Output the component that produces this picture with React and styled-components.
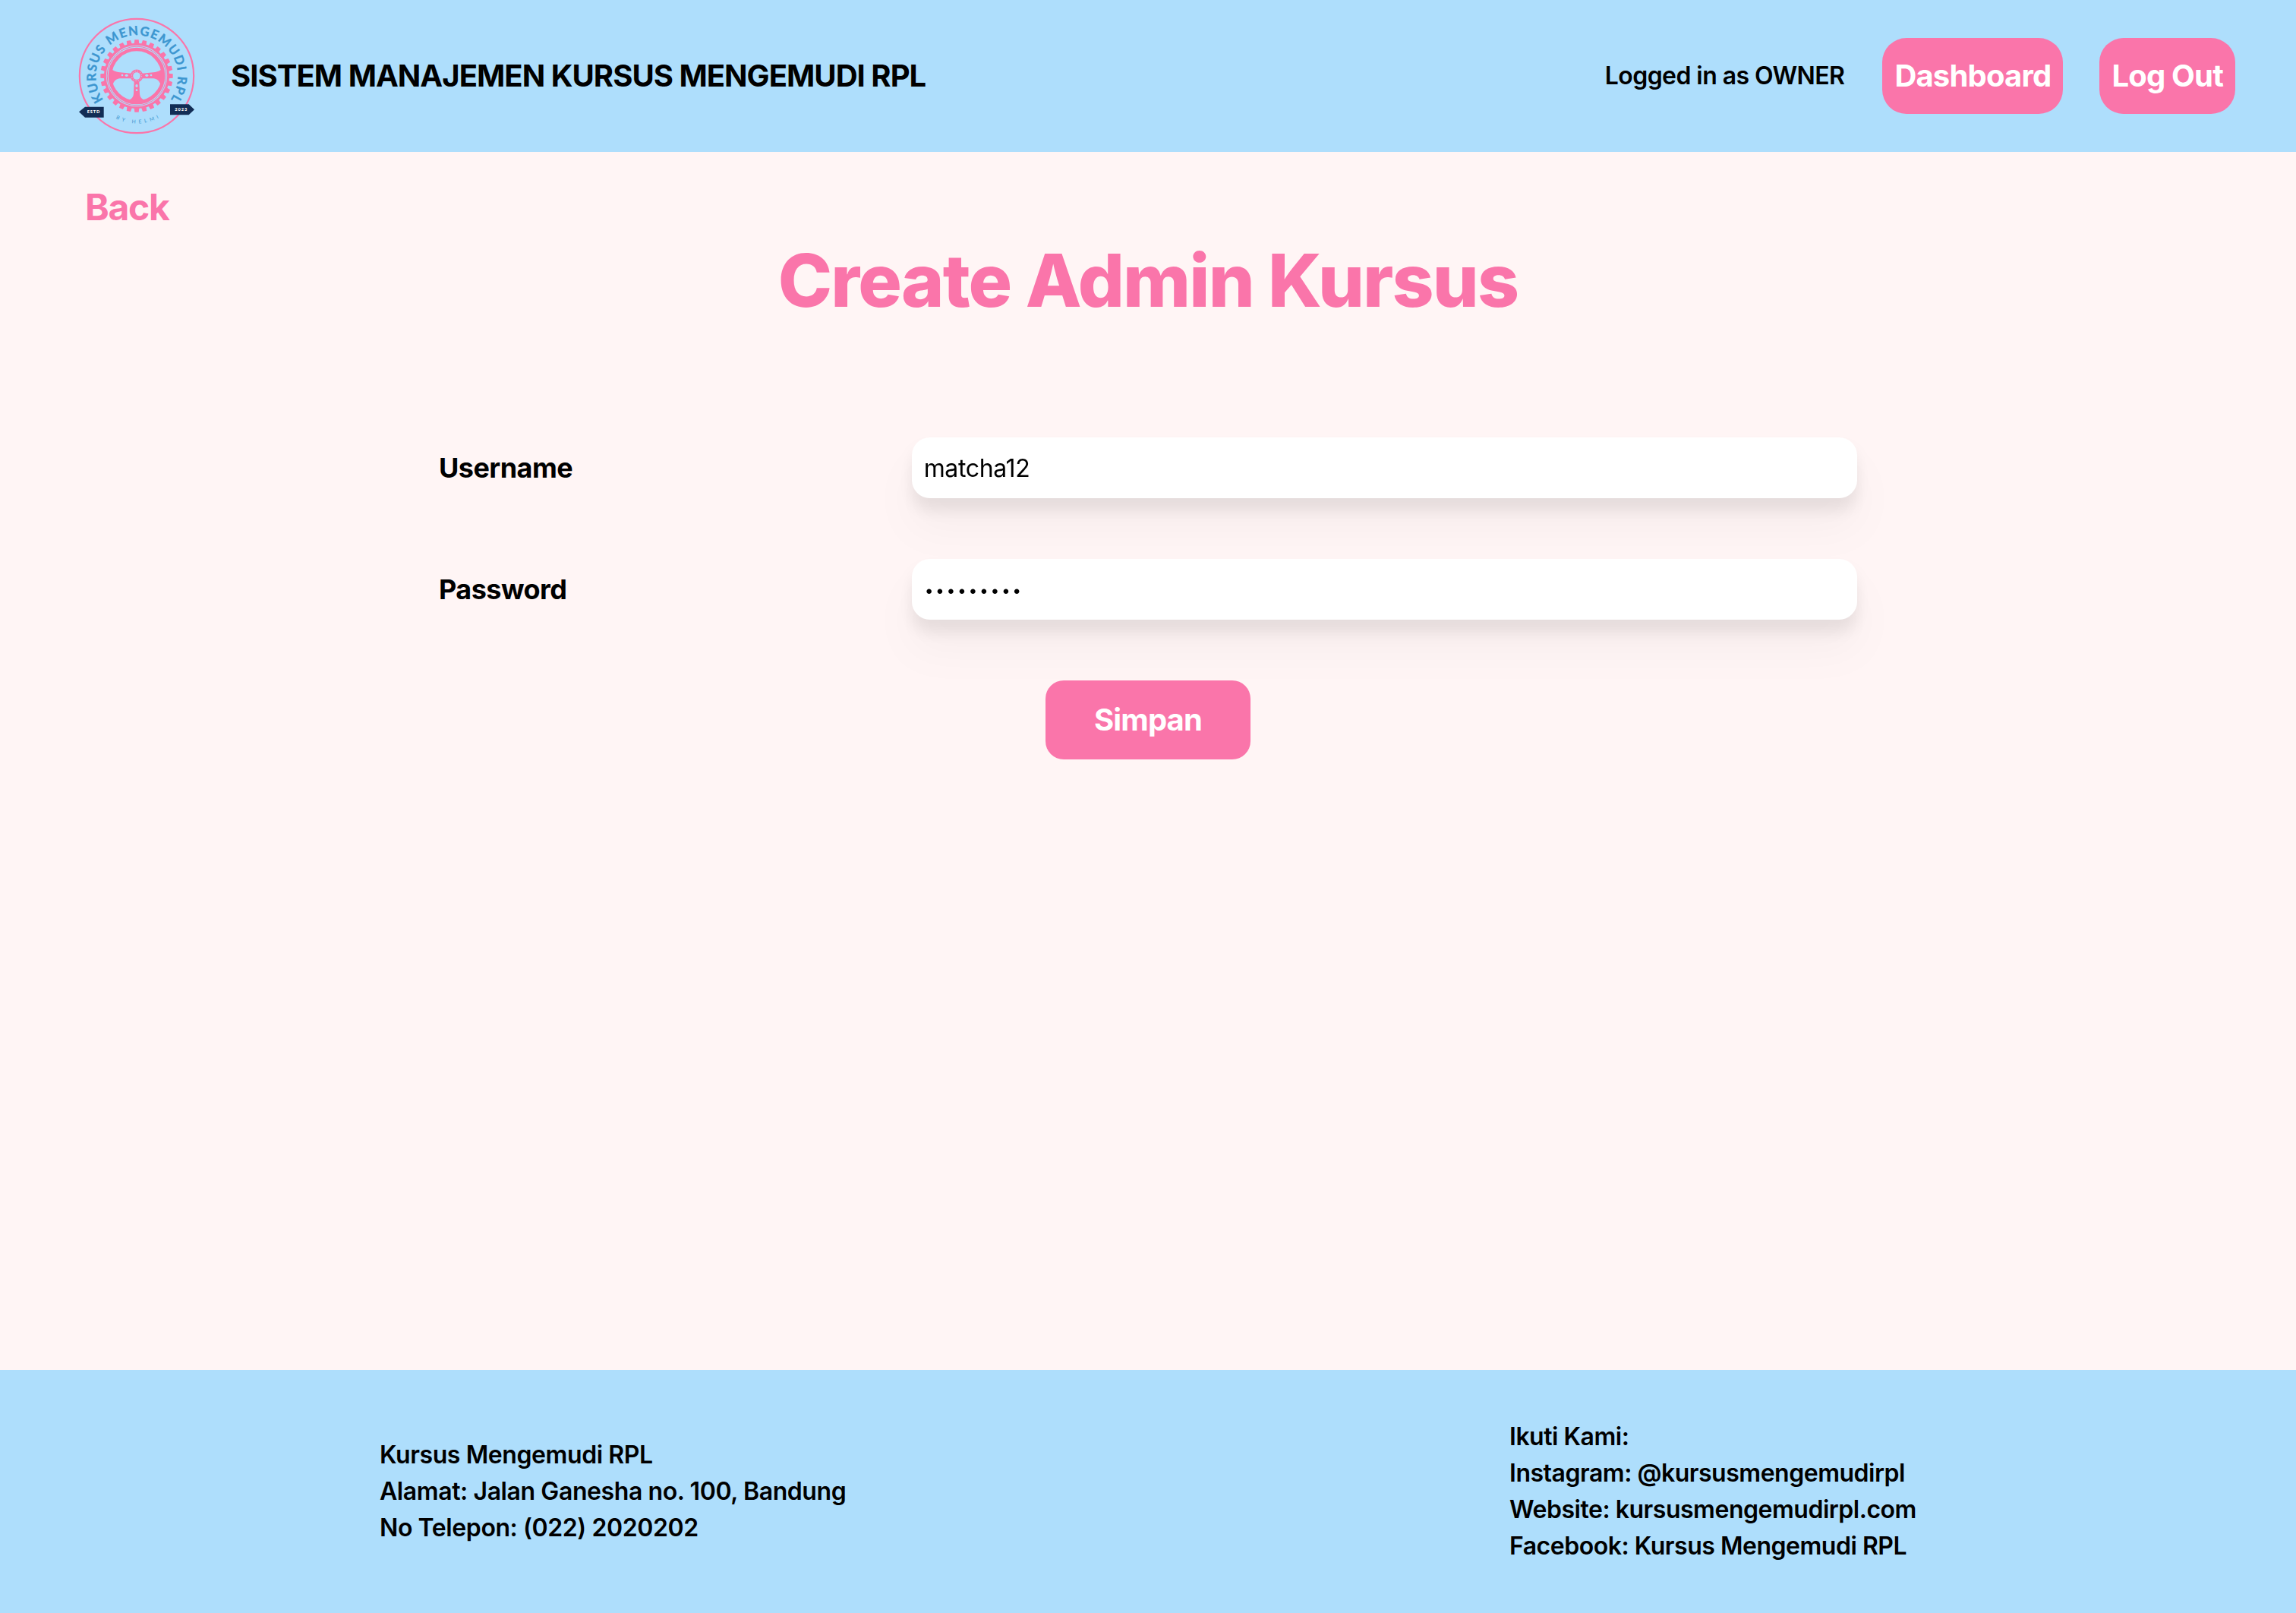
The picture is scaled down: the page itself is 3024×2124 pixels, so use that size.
import React from "react";
import styled, { createGlobalStyle } from "styled-components";

const colors = {
  sky: "#AEDEFC",
  pink: "#FA75AA",
  blush: "#FFF5F5",
  ink: "#000000",
  logoBlue: "#3C96D0",
  navy: "#122D55",
};

const GlobalStyle = createGlobalStyle`
  *, *::before, *::after { box-sizing: border-box; }
  body {
    margin: 0;
    background: ${colors.blush};
    color: ${colors.ink};
    font-family: Inter, "Liberation Sans", sans-serif;
    -webkit-font-smoothing: antialiased;
  }
  h1, p { margin: 0; }
`;

const Page = styled.div`
  display: flex;
  flex-direction: column;
  min-height: 100vh;
`;

const Navbar = styled.header`
  display: flex;
  align-items: center;
  justify-content: space-between;
  height: 200px;
  padding: 0 80px;
  background: ${colors.sky};
`;

const Brand = styled.div`
  display: flex;
  align-items: center;
  gap: 24px;
`;

const BrandName = styled.p`
  font-size: 40px;
  line-height: 56px;
  font-weight: 700;
  letter-spacing: -0.96px;
  white-space: nowrap;
`;

const LogoSvg = styled.svg`
  display: block;
  width: 200px;
  height: 200px;
`;

const NavActions = styled.nav`
  display: flex;
  align-items: center;
  gap: 48px;
`;

const Session = styled.p`
  padding-right: 2px;
  font-size: 32px;
  line-height: 48px;
  font-weight: 600;
  letter-spacing: -0.57px;
`;

const NavButton = styled.button`
  height: 100px;
  padding: 0 16px;
  border: 0;
  border-radius: 32px;
  background: ${colors.pink};
  color: #fff;
  font: 700 40px/56px Inter, "Liberation Sans", sans-serif;
  letter-spacing: -0.81px;
  white-space: nowrap;
`;

const Main = styled.main`
  flex: 1;
  display: flex;
  flex-direction: column;
  padding-top: 40px;
`;

const BackLink = styled.a`
  align-self: flex-start;
  margin-left: 112px;
  color: ${colors.pink};
  font-size: 48px;
  line-height: 65px;
  font-weight: 700;
  letter-spacing: -1.3px;
`;

const Title = styled.h1`
  margin: 15px 0 158px;
  color: ${colors.pink};
  font-size: 96px;
  line-height: 98px;
  font-weight: 800;
  letter-spacing: -1.8px;
  text-align: center;
`;

const Form = styled.form`
  display: flex;
  flex-direction: column;
  align-items: center;
  gap: 80px;
`;

const Field = styled.div`
  display: grid;
  grid-template-columns: 1fr 2fr;
  align-items: center;
  width: 1868px;
`;

const Label = styled.label`
  font-size: 36px;
  line-height: 56px;
  font-weight: 700;
  letter-spacing: -0.54px;
`;

const Input = styled.input`
  width: 100%;
  height: 80px;
  padding: 0 16px;
  border: 0;
  border-radius: 24px;
  outline: 0;
  background: #fff;
  filter: drop-shadow(0 40px 26px rgba(0, 0, 0, 0.03))
    drop-shadow(0 16px 10px rgba(0, 0, 0, 0.08));
  color: ${colors.ink};
  font: 400 32px/48px Inter, "Liberation Sans", sans-serif;
  letter-spacing: -0.36px;

  &[type="password"] {
    padding-left: 17px;
    padding-top: 2px;
    font-size: 21px;
    letter-spacing: 2.65px;
  }
`;

const SubmitButton = styled.button`
  padding: 24px 64px;
  border: 0;
  border-radius: 24px;
  background: ${colors.pink};
  color: #fff;
  font: 700 40px/56px Inter, "Liberation Sans", sans-serif;
  letter-spacing: -0.88px;
`;

const Footer = styled.footer`
  display: flex;
  align-items: center;
  justify-content: space-between;
  height: 320px;
  padding: 0 499px 0 500px;
  background: ${colors.sky};
`;

const FooterColumn = styled.div`
  width: ${(p) => p.$width}px;
  font-size: 32px;
  line-height: 48px;
  font-weight: 600;
  letter-spacing: ${(p) => p.$tracking}px;
  white-space: nowrap;
`;

const TEETH = Array.from({ length: 28 }, (_, i) => (i * 360) / 28);

function Logo() {
  return (
    <LogoSvg viewBox="-30 -30 600 600" role="img" aria-label="Kursus Mengemudi RPL">
      <defs>
        <path id="arc-top" d="M 138.5 364.5 A 162 162 0 1 1 405.5 361.5" />
        <path id="arc-bottom" d="M 187.6 438.3 A 187.5 187.5 0 0 0 360 434.5" />
      </defs>

      <circle cx="270" cy="270" r="225.5" fill="none" stroke={colors.pink} strokeWidth="6.5" />

      {/* gear */}
      <g fill={colors.pink}>
        {TEETH.map((a) => (
          <path key={a} d="M260 144 L262 127 H278 L280 144 Z" transform={`rotate(${a} 270 270)`} />
        ))}
      </g>
      <circle cx="270" cy="270" r="125" fill="none" stroke={colors.pink} strokeWidth="9" />
      <circle cx="270" cy="270" r="116.5" fill="none" stroke={colors.pink} strokeWidth="3" />

      {/* steering wheel */}
      <circle cx="270" cy="270" r="105" fill="none" stroke={colors.pink} strokeWidth="14" />
      <g fill={colors.pink}>
        <path d="M168 243 C178 247 184 254 204 256 L248 260 V280 L204 280 C190 282 184 286 176 302 L168 300 Z" />
        <path d="M372 243 C362 247 356 254 336 256 L292 260 V280 L336 280 C350 282 356 286 364 302 L372 300 Z" />
        <path d="M260 292 H280 L282 340 C283 354 290 362 306 368 L270 378 L234 368 C250 362 257 354 258 340 Z" />
      </g>
      <circle cx="270" cy="270" r="25.5" fill={colors.pink} />
      <circle cx="270" cy="270" r="19.5" fill="none" stroke={colors.sky} strokeWidth="3" strokeDasharray="4 6.21" />
      <circle cx="270" cy="270" r="14.5" fill={colors.sky} />
      <g fill={colors.sky}>
        <circle cx="213" cy="267" r="4" />
        <ellipse cx="230" cy="268" rx="6" ry="5" />
        <circle cx="327" cy="267" r="4" />
        <ellipse cx="310" cy="268" rx="6" ry="5" />
        <ellipse cx="270" cy="309" rx="5" ry="6" />
        <circle cx="270" cy="326" r="4" />
      </g>

      <text
        fill={colors.logoBlue}
        stroke={colors.logoBlue}
        strokeWidth="1"
        fontFamily="Lato, sans-serif"
        fontSize="50"
        fontWeight="700"
        textLength="705"
      >
        <textPath href="#arc-top" textLength="705">KURSUS MENGEMUDI RPL</textPath>
      </text>
      <text fill={colors.logoBlue} fontFamily="Lato, sans-serif" fontSize="20" fontWeight="400">
        <textPath href="#arc-bottom" textLength="176">BY HELMI</textPath>
      </text>

      <g fill={colors.navy}>
        <path d="M42 412 L66 392 H140 V434 H66 Z" />
        <path d="M498 403 L476 382 H402 V424 H476 Z" />
      </g>
      <g fill="#fff" fontFamily="Lato, sans-serif" fontSize="17" fontWeight="900">
        <text x="74" y="417.500" textLength="50">ESTD</text>
        <text x="421" y="408.500" textLength="48">2023</text>
      </g>
    </LogoSvg>
  );
}

export default function App() {
  return (
    <Page>
      <GlobalStyle />
      <Navbar>
        <Brand>
          <Logo />
          <BrandName>SISTEM MANAJEMEN KURSUS MENGEMUDI RPL</BrandName>
        </Brand>
        <NavActions>
          <Session>Logged in as OWNER</Session>
          <NavButton type="button">Dashboard</NavButton>
          <NavButton type="button">Log Out</NavButton>
        </NavActions>
      </Navbar>

      <Main>
        <BackLink>Back</BackLink>
        <Title>Create Admin Kursus</Title>
        <Form onSubmit={(e) => e.preventDefault()}>
          <Field>
            <Label htmlFor="username">Username</Label>
            <Input id="username" type="text" defaultValue="matcha12" />
          </Field>
          <Field>
            <Label htmlFor="password">Password</Label>
            <Input id="password" type="password" defaultValue="matcha123" />
          </Field>
          <SubmitButton type="submit">Simpan</SubmitButton>
        </Form>
      </Main>

      <Footer>
        <FooterColumn $width={616} $tracking={-0.41}>
          <p>Kursus Mengemudi RPL</p>
          <p>Alamat: Jalan Ganesha no. 100, Bandung</p>
          <p>No Telepon: (022) 2020202</p>
        </FooterColumn>
        <FooterColumn $width={537} $tracking={-0.48}>
          <p>Ikuti Kami:</p>
          <p>Instagram: @kursusmengemudirpl</p>
          <p>Website: kursusmengemudirpl.com</p>
          <p>Facebook: Kursus Mengemudi RPL</p>
        </FooterColumn>
      </Footer>
    </Page>
  );
}
